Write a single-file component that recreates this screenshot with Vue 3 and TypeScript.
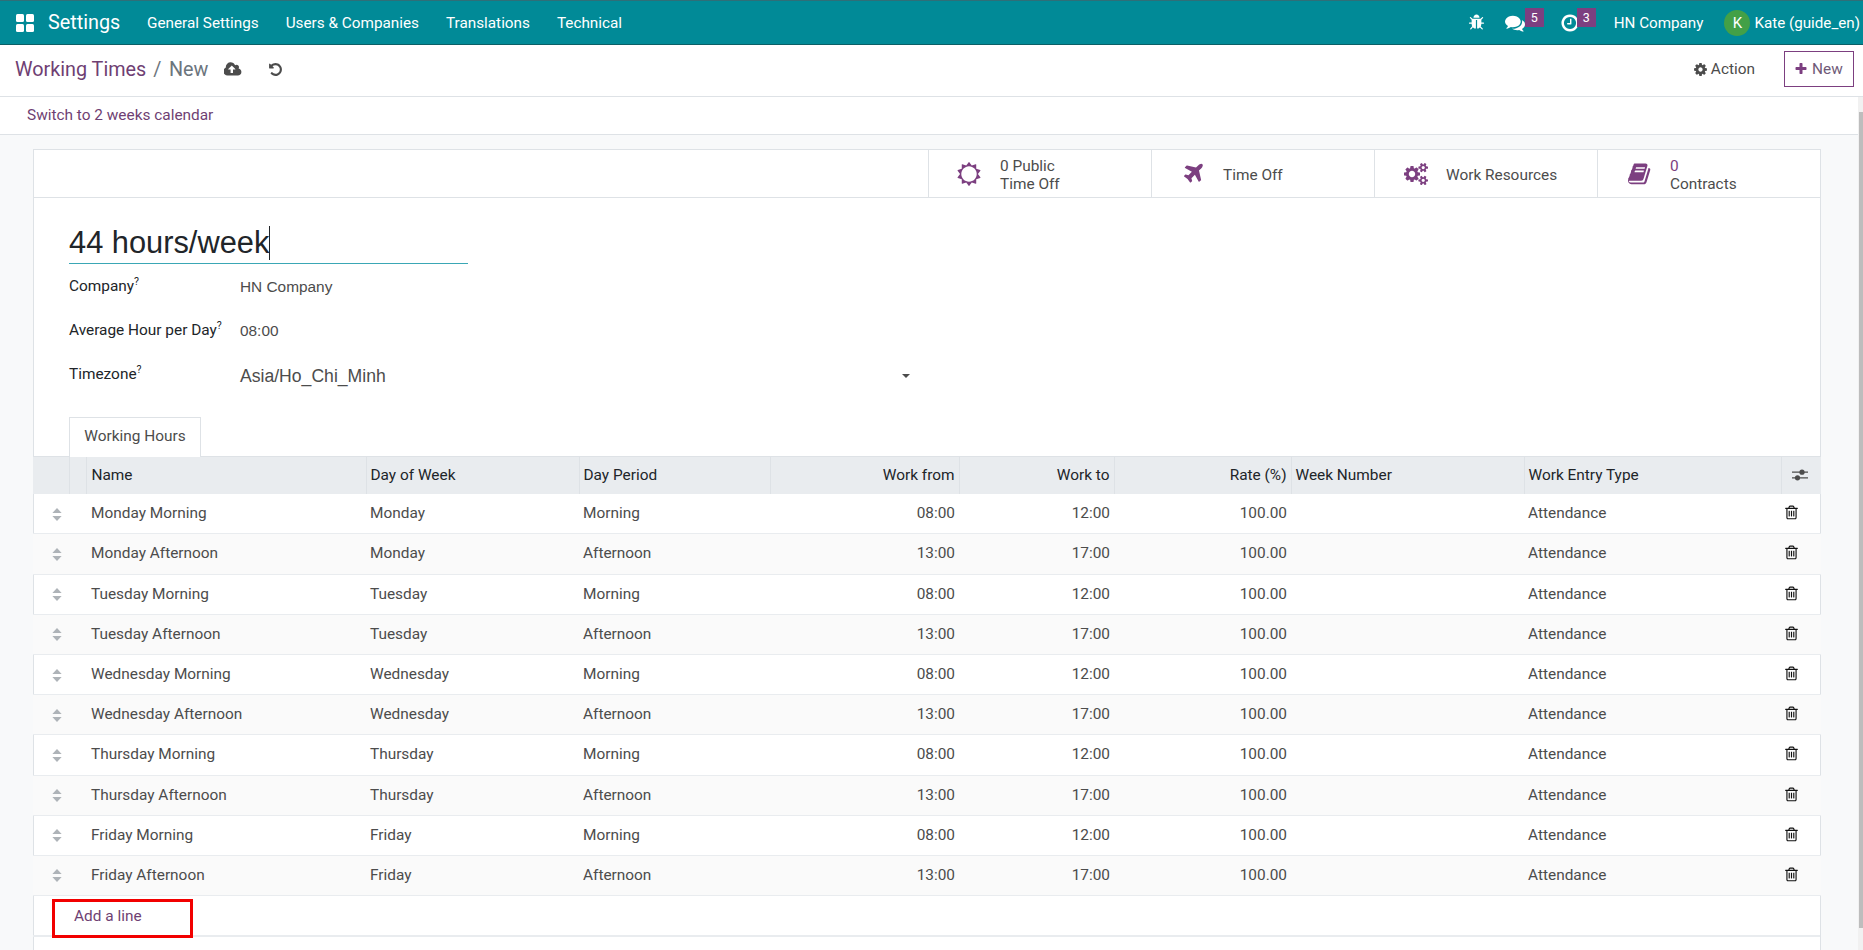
<script setup lang="ts">
const menus = ['General Settings', 'Users & Companies', 'Translations', 'Technical']

const days = ['Monday', 'Tuesday', 'Wednesday', 'Thursday', 'Friday']
const lines = days.flatMap((day) => [
  { name: day + ' Morning', day, period: 'Morning', from: '08:00', to: '12:00' },
  { name: day + ' Afternoon', day, period: 'Afternoon', from: '13:00', to: '17:00' },
])
</script>

<template>
  <div class="page">
    <header class="navbar">
      <svg class="apps" viewBox="0 0 18 18"><rect x="0" y="0" width="8" height="8" rx="1.5" /><rect x="10" y="0" width="8" height="8" rx="1.5" /><rect x="0" y="10" width="8" height="8" rx="1.5" /><rect x="10" y="10" width="8" height="8" rx="1.5" /></svg>
      <span class="brand">Settings</span>
      <nav class="menu">
        <a v-for="m in menus" :key="m">{{ m }}</a>
      </nav>
      <div class="systray">
        <svg class="tray-bug" viewBox="0 0 1792 1792"><path d="M1696 960q0 26-19 45t-45 19h-224q0 171-67 290l208 209q19 19 19 45t-19 45q-18 19-45 19t-45-19l-198-197q-5 5-15 13t-42 28.5-65 36.5-82 29-97 13v-896h-128v896q-51 0-101.5-13.5t-87-33-66-39-43.5-32.5l-15-14-183 207q-20 21-48 21-24 0-43-16-19-18-20.5-44.5t15.5-46.5l202-227q-58-114-58-274h-224q-26 0-45-19t-19-45 19-45 45-19h224v-294l-173-173q-19-19-19-45t19-45 45-19 45 19l173 173h844l173-173q19-19 45-19t45 19 19 45-19 45l-173 173v294h224q26 0 45 19t19 45zm-480-576h-640q0-133 93.5-226.5t226.5-93.5 226.5 93.5 93.5 226.5z" /></svg>
        <div class="tray-item chat">
          <svg viewBox="0 0 1792 1792"><path d="M1408 768q0 139-94 257t-256.5 186.5-353.5 68.5q-86 0-176-16-124 88-278 128-36 9-86 16h-3q-11 0-20.5-8t-11.5-21q-1-3-1-6.5t.5-6.5 2-6l2.5-5 3.5-5.5 4-5 4.5-5 4-4.5q5-6 23-25t26-29.5 22.5-29 25-38.5 20.5-44q-124-72-195-177t-71-224q0-139 94-257t256.5-186.5 353.5-68.5 353.5 68.5 256.5 186.5 94 257zm384 256q0 120-71 224.5t-195 176.5q10 24 20.5 44t25 38.5 22.5 29 26 29.5 23 25q1 1 4 4.5t4.5 5 4 5 3.5 5.5l2.5 5 2 6 .5 6.5-1 6.5q-3 14-13 22t-22 7q-50-7-86-16-154-40-278-128-90 16-176 16-271 0-472-132 58 4 88 4 161 0 309-45t264-129q125-92 192-212t67-254q0-77-23-152 129 71 204 178t75 230z" /></svg>
          <span class="badge">5</span>
        </div>
        <div class="tray-item clock">
          <svg viewBox="0 0 1792 1792"><path d="M1024 544v448q0 14-9 23t-23 9h-320q-14 0-23-9t-9-23v-64q0-14 9-23t23-9h224v-352q0-14 9-23t23-9h64q14 0 23 9t9 23zm416 352q0-148-73-273t-198-198-273-73-273 73-198 198-73 273 73 273 198 198 273 73 273-73 198-198 73-273zm224 0q0 209-103 385.5t-279.5 279.5-385.5 103-385.5-103-279.5-279.5-103-385.5 103-385.5 279.5-279.5 385.5-103 385.5 103 279.5 279.5 103 385.5z" /></svg>
          <span class="badge">3</span>
        </div>
        <span class="company">HN Company</span>
        <span class="avatar">K</span>
        <span class="user">Kate (guide_en)</span>
      </div>
    </header>

    <section class="control">
      <div class="crumbs">
        <a class="crumb">Working Times</a>
        <span class="sep">/</span>
        <span class="current">New</span>
        <svg class="save" viewBox="0 0 1920 1792"><path d="M1216 864q0-14-9-23l-352-352q-9-9-23-9t-23 9l-351 351q-10 12-10 24 0 14 9 23t23 9h224v352q0 13 9.5 22.5t22.5 9.5h192q13 0 22.5-9.5t9.5-22.5v-352h224q13 0 22.5-9.5t9.5-22.5zm640 288q0 159-112.5 271.5t-271.5 112.5h-1088q-185 0-316.5-131.5t-131.5-316.5q0-130 70-240t188-165q-2-30-2-43 0-212 150-362t362-150q156 0 285.5 87t188.5 231q71-62 166-62 106 0 181 75t75 181q0 76-41 138 130 31 213.5 135.5t83.5 238.5z" /></svg>
        <svg class="undo" viewBox="0 0 1792 1792"><path d="M1664 896q0 156-61 298t-164 245-245 164-298 61q-172 0-327-72.5t-264-204.5q-7-10-6.5-22.5t8.5-20.5l137-138q10-9 25-9 16 2 23 12 73 95 179 147t225 52q104 0 198.5-40.5t163.5-109.5 109.5-163.5 40.5-198.5-40.5-198.5-109.5-163.5-163.5-109.5-198.5-40.5q-98 0-188 35.5t-160 101.5l137 138q31 30 14 69-17 40-59 40h-448q-26 0-45-19t-19-45v-448q0-42 40-59 39-17 69 14l130 129q107-101 244.5-156.5t284.5-55.5q156 0 298 61t245 164 164 245 61 298z" /></svg>
      </div>
      <div class="actions">
        <span class="action">
          <svg viewBox="0 0 1792 1792"><path d="M1152 896q0-106-75-181t-181-75-181 75-75 181 75 181 181 75 181-75 75-181zm512-109v222q0 12-8 23t-20 13l-185 28q-19 54-39 91 35 50 107 138 10 12 10 25t-9 23q-27 37-99 108t-94 71q-12 0-26-9l-138-108q-44 23-91 38-16 136-29 186-7 28-36 28h-222q-14 0-24.5-8.5t-11.5-21.5l-28-184q-49-16-90-37l-141 107q-10 9-25 9-14 0-25-11-126-114-165-168-7-10-7-23 0-12 8-23 15-21 51-66.5t54-70.5q-27-50-41-99l-183-27q-13-2-21-12.5t-8-23.5v-222q0-12 8-23t19-13l186-28q14-46 39-92-40-57-107-138-10-12-10-24 0-10 9-23 26-36 98.5-107.5t94.5-71.5q13 0 26 10l138 107q44-23 91-38 16-136 29-186 7-28 36-28h222q14 0 24.5 8.5t11.5 21.5l28 184q49 16 90 37l142-107q9-9 24-9 13 0 25 10 129 119 165 170 7 8 7 22 0 12-8 23-15 21-51 66.5t-54 70.5q26 50 41 98l183 28q13 2 21 12.5t8 23.5z" /></svg>
          Action
        </span>
        <button class="btn-new">
          <svg viewBox="0 0 1792 1792"><path d="M1600 736v192q0 40-28 68t-68 28h-416v416q0 40-28 68t-68 28h-192q-40 0-68-28t-28-68v-416h-416q-40 0-68-28t-28-68v-192q0-40 28-68t68-28h416v-416q0-40 28-68t68-28h192q40 0 68 28t28 68v416h416q40 0 68 28t28 68z" /></svg>
          New
        </button>
      </div>
    </section>

    <div class="switch-bar"><a>Switch to 2 weeks calendar</a></div>

    <main class="content">
      <div class="sheet">
        <div class="stats">
          <div class="stat">
            <svg viewBox="0 0 1792 1792"><path d="M1472 896q0-117-45.5-223.5t-123-184-184-123-223.5-45.5-223.5 45.5-184 123-123 184-45.5 223.5 45.5 223.5 123 184 184 123 223.5 45.5 223.5-45.5 184-123 123-184 45.5-223.5zm276 277q-4 15-20 20l-292 96v306q0 16-13 26-15 10-29 4l-292-94-180 248q-10 13-26 13t-26-13l-180-248-292 94q-14 6-29-4-13-10-13-26v-306l-292-96q-16-5-20-20-5-17 4-29l180-248-180-248q-9-13-4-29 4-15 20-20l292-96v-306q0-16 13-26 15-10 29-4l292 94 180-248q9-12 26-12t26 12l180 248 292-94q14-6 29 4 13 10 13 26v306l292 96q16 5 20 20 5 16-4 29l-180 248 180 248q9 12 4 29z" /></svg>
            <div class="stat-text"><span>0 Public</span><span>Time Off</span></div>
          </div>
          <div class="stat plane">
            <svg viewBox="0 0 1792 1792"><path d="M1376 160q44 52 12 148t-108 172l-161 161 160 696q5 19-12 33l-128 96q-7 6-19 6-4 0-7-1-15-3-21-16l-279-508-259 259 53 194q5 17-8 31l-96 96q-9 9-23 9h-2q-15-2-24-13l-189-252-252-189q-11-7-13-23-1-13 9-25l96-97q9-9 23-9 6 0 8 1l194 53 259-259-508-279q-14-8-17-24-2-16 9-27l128-128q14-13 30-8l665 159 160-160q76-76 172-108t148 12z" /></svg>
            <div class="stat-text"><span>Time Off</span></div>
          </div>
          <div class="stat gears">
            <svg viewBox="0 0 1920 1792"><path d="M896 896q0-106-75-181t-181-75-181 75-75 181 75 181 181 75 181-75 75-181zm768 512q0-52-38-90t-90-38-90 38-38 90q0 53 37.5 90.5t90.5 37.5 90.5-37.5 37.5-90.5zm0-1024q0-52-38-90t-90-38-90 38-38 90q0 53 37.5 90.5t90.5 37.5 90.5-37.5 37.5-90.5zm-384 421v185q0 10-7 19.5t-16 10.5l-155 24q-11 35-32 76 34 48 90 115 7 11 7 20 0 12-7 19-23 30-82.5 89.5t-78.5 59.5q-11 0-21-7l-115-90q-37 19-77 31-11 108-23 155-7 24-30 24h-186q-11 0-20-7.5t-10-17.5l-23-153q-34-10-75-31l-118 89q-7 7-20 7-11 0-21-8-144-133-144-160 0-9 7-19 10-14 41-53t47-61q-23-44-35-82l-152-24q-10-1-17-9.5t-7-19.5v-185q0-10 7-19.5t16-10.5l155-24q11-35 32-76-34-48-90-115-7-11-7-20 0-12 7-20 22-30 82-89t79-59q11 0 21 7l115 90q34-18 77-32 11-108 23-154 7-24 30-24h186q11 0 20 7.5t10 17.5l23 153q34 10 75 31l118-89q8-7 20-7 11 0 21 8 144 133 144 160 0 8-7 19-12 16-42 54t-45 60q23 48 34 82l152 23q10 2 17 10.5t7 19.5zm640 533v140q0 16-149 31-12 27-30 52 51 113 51 138 0 4-4 7-122 71-124 71-8 0-46-47t-52-68q-20 2-30 2t-30-2q-14 21-52 68t-46 47q-2 0-124-71-4-3-4-7 0-25 51-138-18-25-30-52-149-15-149-31v-140q0-16 149-31 13-29 30-52-51-113-51-138 0-4 4-7 4-2 35-20t59-34 30-16q8 0 46 46.5t52 67.5q20-2 30-2t30 2q51-71 92-112l6-2q4 0 124 70 4 3 4 7 0 25-51 138 17 23 30 52 149 15 149 31zm0-1024v140q0 16-149 31-12 27-30 52 51 113 51 138 0 4-4 7-122 71-124 71-8 0-46-47t-52-68q-20 2-30 2t-30-2q-14 21-52 68t-46 47q-2 0-124-71-4-3-4-7 0-25 51-138-18-25-30-52-149-15-149-31v-140q0-16 149-31 13-29 30-52-51-113-51-138 0-4 4-7 4-2 35-20t59-34 30-16q8 0 46 46.5t52 67.5q20-2 30-2t30 2q51-71 92-112l6-2q4 0 124 70 4 3 4 7 0 25-51 138 17 23 30 52 149 15 149 31z" /></svg>
            <div class="stat-text"><span>Work Resources</span></div>
          </div>
          <div class="stat book">
            <svg viewBox="0 0 1792 1792"><path d="M1639 478q40 57 18 129l-275 906q-19 64-76.5 107.5t-122.5 43.5h-923q-77 0-148.5-53.5t-99.5-131.5q-24-67-2-127 0-4 3-27t4-37q1-8-3-21.5t-3-19.5q2-11 8-21t16.5-23.5 16.5-23.5q23-38 45-91.5t30-91.5q3-10 .5-30t-.5-28q3-11 17-28t17-23q21-36 42-92t25-90q1-9-2.5-32t.5-28q4-13 22-30.5t22-22.5q19-26 42.5-84.5t27.5-96.5q1-8-3-25.5t-2-26.5q2-8 9-18t18-23 17-21q8-12 16.5-35t15-43.5 17-44.5 21.5-36.5 30-18.5 41-3l-1 3q19-4 35-4h761q74 0 114 56t18 130l-274 906q-36 119-71.5 153.5t-128.5 34.5h-869q-27 0-38 15-11 16-1 43 24 70 144 70h923q29 0 56-15.5t35-41.5l300-987q7-22 5-57 38 15 59 43zm-1064 2q-4 13 2 22.5t20 9.5h608q13 0 25.5-9.5t16.5-22.5l21-64q4-13-2-22.5t-20-9.5h-608q-13 0-25.5 9.5t-16.5 22.5zm-83 256q-4 13 2 22.5t20 9.5h608q13 0 25.5-9.5t16.5-22.5l21-64q4-13-2-22.5t-20-9.5h-608q-13 0-25.5 9.5t-16.5 22.5z" /></svg>
            <div class="stat-text"><span class="num">0</span><span>Contracts</span></div>
          </div>
        </div>

        <div class="form">
          <div class="title-input">44 hours/week<i class="cursor"></i></div>
          <div class="field">
            <label>Company<sup>?</sup></label>
            <span class="val">HN Company</span>
          </div>
          <div class="field">
            <label>Average Hour per Day<sup>?</sup></label>
            <span class="val">08:00</span>
          </div>
          <div class="field tz">
            <label>Timezone<sup>?</sup></label>
            <div class="select"><span>Asia/Ho_Chi_Minh</span><i class="caret"></i></div>
          </div>
        </div>

        <div class="tabs"><span class="tab">Working Hours</span></div>

        <table class="lines">
          <colgroup>
            <col style="width: 36px" /><col style="width: 17px" /><col style="width: 280px" /><col style="width: 213px" /><col style="width: 191px" /><col style="width: 189px" /><col style="width: 155px" /><col style="width: 177px" /><col style="width: 233px" /><col style="width: 257px" /><col style="width: 40px" />
          </colgroup>
          <thead>
            <tr>
              <th></th>
              <th></th>
              <th class="name-col">Name</th>
              <th>Day of Week</th>
              <th>Day Period</th>
              <th class="num-col">Work from</th>
              <th class="num-col">Work to</th>
              <th class="num-col">Rate (%)</th>
              <th>Week Number</th>
              <th>Work Entry Type</th>
              <th class="opt">
                <svg viewBox="0 0 16 12"><path d="M0 3.2h16M0 8.8h16" stroke="#4c4c4c" stroke-width="1.3" /><circle cx="10" cy="3.2" r="2.6" fill="#4c4c4c" /><circle cx="5.5" cy="8.8" r="2.6" fill="#4c4c4c" /></svg>
              </th>
            </tr>
          </thead>
          <tbody>
            <tr v-for="line in lines" :key="line.name">
              <td class="handle" colspan="2">
                <svg viewBox="0 0 10 14"><path d="M5 0L10 5.5H0zM5 14L0 8.500H10z" /></svg>
              </td>
              <td class="name-col">{{ line.name }}</td>
              <td>{{ line.day }}</td>
              <td>{{ line.period }}</td>
              <td class="num-col">{{ line.from }}</td>
              <td class="num-col">{{ line.to }}</td>
              <td class="num-col">100.00</td>
              <td></td>
              <td>Attendance</td>
              <td class="del">
                <svg viewBox="0 0 1408 1792"><path d="M512 672v576q0 14-9 23t-23 9h-64q-14 0-23-9t-9-23v-576q0-14 9-23t23-9h64q14 0 23 9t9 23zm256 0v576q0 14-9 23t-23 9h-64q-14 0-23-9t-9-23v-576q0-14 9-23t23-9h64q14 0 23 9t9 23zm256 0v576q0 14-9 23t-23 9h-64q-14 0-23-9t-9-23v-576q0-14 9-23t23-9h64q14 0 23 9t9 23zm128 724v-948h-896v948q0 22 7 40.500t14.500 27 10.500 8.500h832q3 0 10.500-8.500t14.500-27 7-40.500zm-672-1076h448l-48-117q-7-9-17-11h-317q-10 2-17 11zm928 32v64q0 14-9 23t-23 9h-96v948q0 83-47 143.500t-113 60.500h-832q-66 0-113-58.500t-47-141.500v-952h-96q-14 0-23-9t-9-23v-64q0-14 9-23t23-9h309l70-167q15-37 54-63t79-26h320q40 0 79 26t54 63l70 167h309q14 0 23 9t9 23z" /></svg>
              </td>
            </tr>
          </tbody>
        </table>

        <div class="add-row">
          <a>Add a line</a>
          <span class="mark"></span>
        </div>
      </div>
    </main>

    <div class="scrollbar"><span class="thumb"></span></div>
  </div>
</template>

<style scoped>
.page {
  position: relative;
  width: 1863px;
  height: 950px;
  overflow: hidden;
  background: #fff;
  font-family: Roboto, "Liberation Sans", sans-serif;
  font-size: 15.4px;
  color: #4c4c4c;
}

.navbar {
  display: flex;
  align-items: center;
  height: 45px;
  box-sizing: border-box;
  padding: 0 3px 0 16px;
  background: #018a97;
  border-top: 1px solid #2f6f78;
  border-bottom: 1px solid #0b5f66;
  color: #fff;
}
.apps {
  width: 18px;
  height: 18px;
  fill: #fff;
  margin-right: 14px;
}
.brand {
  font-size: 19.800px;
  width: 99px;
}
.menu {
  display: flex;
  gap: 27px;
  font-size: 15.300px;
}
.systray {
  margin-left: auto;
  display: flex;
  align-items: center;
  font-size: 15.200px;
}
.systray svg {
  fill: #fff;
  display: block;
}
.tray-bug {
  width: 17px;
  height: 17px;
  margin-right: 20px;
}
.tray-item {
  position: relative;
  width: 20px;
  height: 20px;
}
.tray-item svg {
  width: 20px;
  height: 20px;
}
.chat {
  margin-right: 35px;
}
.clock {
  margin-right: 34px;
}
.badge {
  position: absolute;
  left: 20px;
  top: -5px;
  width: 19px;
  height: 19px;
  background: #7c3f80;
  font-size: 12.500px;
  line-height: 19px;
  text-align: center;
}
.clock .badge {
  left: 17px;
}
.company {
  margin-right: 21px;
}
.avatar {
  width: 26px;
  height: 26px;
  border-radius: 50%;
  background: #43a047;
  text-align: center;
  line-height: 26px;
  font-size: 15px;
  margin-right: 4px;
}
.user {
  white-space: nowrap;
}

.control {
  display: flex;
  justify-content: space-between;
  align-items: center;
  height: 52px;
  box-sizing: border-box;
  padding: 0 9px 3px 15px;
  border-bottom: 1px solid #dee2e6;
}
.crumbs {
  display: flex;
  align-items: center;
  font-size: 19.800px;
}
.crumb {
  color: #6f3f73;
}
.sep {
  color: #6c757d;
  margin: 0 7.500px 0 7px;
}
.current {
  color: #6c757d;
}
.save {
  width: 18px;
  height: 17px;
  fill: #4c4c4c;
  margin-left: 16px;
}
.undo {
  width: 15px;
  height: 15px;
  fill: #4c4c4c;
  margin-left: 26px;
}
.actions {
  display: flex;
  align-items: center;
}
.action {
  display: flex;
  align-items: center;
  gap: 3px;
  margin-right: 29px;
}
.action svg {
  width: 15px;
  height: 15px;
  fill: #4c4c4c;
}
.btn-new {
  display: flex;
  align-items: center;
  gap: 4px;
  width: 70px;
  height: 36px;
  box-sizing: border-box;
  padding: 0 0 0 9px;
  background: #fff;
  border: 1px solid #7c3f80;
  color: #6f5a78;
  font: inherit;
}
.btn-new svg {
  width: 14px;
  height: 14px;
  fill: #7c3f80;
}

.switch-bar {
  height: 38px;
  box-sizing: border-box;
  padding-left: 27px;
  line-height: 36px;
  color: #6f3f73;
  border-bottom: 1px solid #dee2e6;
}

.content {
  height: 815px;
  padding: 14px 0 0 33px;
  box-sizing: border-box;
  background: #f8f9fa;
}
.sheet {
  width: 1788px;
  height: 100%;
  box-sizing: border-box;
  background: #fff;
  border: 1px solid #dee2e6;
  border-bottom: 0;
}

.stats {
  display: flex;
  justify-content: flex-end;
  height: 47px;
  border-bottom: 1px solid #dee2e6;
}
.stat {
  display: flex;
  align-items: center;
  width: 223px;
  box-sizing: border-box;
  border-left: 1px solid #dee2e6;
  padding-left: 28px;
}
.stat svg {
  width: 24px;
  height: 24px;
  fill: #7c3f80;
  margin-right: 19px;
  flex: none;
}
.plane svg {
  margin-left: 4px;
  margin-right: 15px;
}
.gears svg {
  margin-left: 1px;
  margin-right: 18px;
}
.book svg {
  margin-left: 2px;
  margin-right: 18px;
}
.stat-text {
  display: flex;
  flex-direction: column;
  line-height: 18px;
  padding-top: 2px;
}
.num {
  color: #7c3f80;
}

.form {
  padding: 25px 0 0 35px;
}
.title-input {
  width: 399px;
  height: 41px;
  box-sizing: border-box;
  border-bottom: 1px solid #3aa7b5;
  font-family: "Liberation Sans", sans-serif;
  font-size: 30.800px;
  line-height: 39px;
  color: #212529;
  white-space: nowrap;
}
.cursor {
  display: inline-block;
  width: 1px;
  height: 34px;
  background: #212529;
  vertical-align: -7px;
}
.field {
  display: flex;
  align-items: center;
  height: 44px;
}
.field:nth-child(2) {
  margin-top: 1px;
}
.field label {
  width: 171px;
  color: #212529;
  position: relative;
  top: -1px;
}
.field sup {
  font-size: 10.500px;
  line-height: 0;
}
.val {
  font-family: "Liberation Sans", sans-serif;
}
.tz {
  height: 46px;
}
.tz label {
  top: -2px;
}
.select {
  display: flex;
  justify-content: space-between;
  align-items: center;
  width: 670px;
  font-family: "Liberation Sans", sans-serif;
  font-size: 17.600px;
}
.caret {
  width: 0;
  height: 0;
  border-left: 4px solid transparent;
  border-right: 4px solid transparent;
  border-top: 4px solid #4c4c4c;
}

.tabs {
  display: flex;
  margin-top: 17.600px;
  padding-left: 35px;
  height: 39px;
  box-sizing: border-box;
}
.tab {
  display: block;
  width: 132px;
  height: 40px;
  box-sizing: border-box;
  border: 1px solid #dee2e6;
  border-bottom: 0;
  background: #fff;
  text-align: center;
  line-height: 37px;
  position: relative;
  z-index: 1;
}

.lines {
  table-layout: fixed;
  width: 1788px;
  margin-left: -1px;
  border-collapse: collapse;
}
.lines th {
  height: 37.600px;
  padding: 0 4px;
  background: #e9ecef;
  border-left: 1px solid #dee2e6;
  color: #212529;
  font-weight: 400;
  text-align: left;
  border-top: 1px solid #dee2e6;
  box-sizing: border-box;
}
.lines th:first-child {
  border-left: 0;
}
.lines td {
  height: 40.200px;
  padding: 0 4px 1px;
  border-bottom: 1px solid #e9ecef;
  box-sizing: border-box;
}
.lines .name-col {
  padding-left: 5px;
}
.lines tbody tr:nth-child(even) {
  background: #fafafa;
}
.lines .num-col {
  text-align: right;
}
.handle svg {
  display: block;
  width: 10px;
  height: 13px;
  margin: 2px 0 0 15px;
  fill: #aeb3b8;
}
.opt svg {
  display: block;
  width: 16px;
  height: 12px;
  margin-left: 6px;
}
.del svg {
  display: block;
  width: 13px;
  height: 16px;
  fill: #111;
}

.add-row {
  position: relative;
  height: 41px;
  box-sizing: border-box;
  padding-left: 41px;
  line-height: 40px;
  color: #6f3f73;
  border-bottom: 2px solid #e9ecef;
  margin-left: -1px;
}
.mark {
  position: absolute;
  left: 19px;
  top: 3px;
  width: 141px;
  height: 39px;
  box-sizing: border-box;
  border: 3px solid #f20000;
}

.scrollbar {
  position: absolute;
  right: 0;
  top: 97px;
  bottom: 0;
  width: 5px;
  background: #f1f1f1;
}
.thumb {
  position: absolute;
  top: 15px;
  left: 1px;
  right: 0;
  height: 816px;
  background: #bdbdbd;
}
</style>

<style>
html,
body {
  margin: 0;
  overflow: hidden;
}
</style>
